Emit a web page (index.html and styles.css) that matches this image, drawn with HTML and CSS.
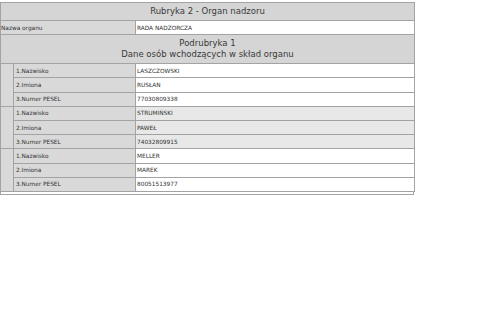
FILE: index.html
```html
<!DOCTYPE html>
<html lang="pl">
<head>
<meta charset="utf-8">
<link rel="stylesheet" href="styles.css">
</head>
<body>
<div class="frame">
<table class="grid">
  <colgroup><col class="c1"><col class="c2"><col class="c3"></colgroup>
  <tr class="h1"><td colspan="3" class="head">Rubryka 2 - Organ nadzoru</td></tr>
  <tr class="r"><td colspan="2" class="lab lab0">Nazwa organu</td><td class="val">RADA NADZORCZA</td></tr>
  <tr class="h2"><td colspan="3" class="head">Podrubryka 1<br>Dane osób wchodzących w skład organu</td></tr>
  <tr class="r"><td rowspan="3" class="side"></td><td class="lab">1.Nazwisko</td><td class="val">LASZCZOWSKI</td></tr>
  <tr class="r"><td class="lab">2.Imiona</td><td class="val">RUSŁAN</td></tr>
  <tr class="r"><td class="lab">3.Numer PESEL</td><td class="val">77030809338</td></tr>
  <tr class="r"><td rowspan="3" class="side"></td><td class="lab">1.Nazwisko</td><td class="val alt">STRUMIŃSKI</td></tr>
  <tr class="r"><td class="lab">2.Imiona</td><td class="val alt">PAWEŁ</td></tr>
  <tr class="r"><td class="lab">3.Numer PESEL</td><td class="val alt">74032809915</td></tr>
  <tr class="r"><td rowspan="3" class="side"></td><td class="lab">1.Nazwisko</td><td class="val">MELLER</td></tr>
  <tr class="r"><td class="lab">2.Imiona</td><td class="val">MAREK</td></tr>
  <tr class="r"><td class="lab">3.Numer PESEL</td><td class="val">80051513977</td></tr>
</table>
<div class="tail"></div>
</div>
</body>
</html>
```
FILE: styles.css
```css
html, body { margin: 0; padding: 0; background: #fff; }
body { padding-top: 2px; font-family: "DejaVu Sans", sans-serif; color: #333; }
.frame { width: 414px; }
.grid { width: 414px; border-collapse: collapse; table-layout: fixed; }
.c1 { width: 13px; }
.c2 { width: 122px; }
.c3 { width: 279px; }
.grid td { border: 1px solid #a3a3a3; padding: 0 1px; font-size: 5.8px; line-height: 8px; vertical-align: middle; white-space: nowrap; overflow: hidden; }
.head { background: #d5d5d5; text-align: center; font-size: 8.5px !important; line-height: 11px !important; color: #3a3a3a; }
.h1 td { height: 17px; }
.h2 td { height: 28px; }
.r td { height: 13.2px; }
.lab { background: #d9d9d9; padding-left: 2px !important; }
.lab0 { padding-left: 0 !important; }
.side { background: #d9d9d9; }
.val { background: #fff; padding-left: 1px !important; }
.alt { background: #e8e8e8; }
.tail { height: 2px; border: 1px solid #a3a3a3; border-top: none; }
```
